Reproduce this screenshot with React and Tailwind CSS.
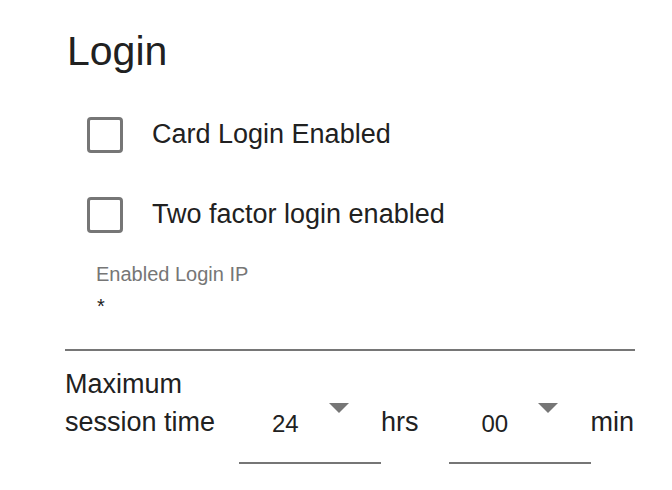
import { useState } from 'react';

const Checkbox = ({ label }) => {
  const [checked, setChecked] = useState(false);

  return (
    <label className="flex items-center h-[80px] pl-[87px] cursor-pointer">
      <span
        onClick={() => setChecked(!checked)}
        className="w-[36px] h-[36px] border-[3px] border-[#767676] rounded-[4px] shrink-0"
      ></span>
      <span className="ml-[29px] text-[27px] leading-[30px] text-[#212121] -mt-[3px]">{label}</span>
    </label>
  );
};

const SelectField = ({ value }) => {
  return (
    <div className="flex items-start w-[142px] h-[99px] border-b-2 border-[#767676] pl-[33px] shrink-0">
      <span className="mt-[45px] text-[24px] leading-[28px] text-[#212121]">{value}</span>
      <svg className="mt-[38px] ml-[30px] shrink-0" width="20" height="10" viewBox="0 0 20 10">
        <path d="M0 0 L20 0 L10 10 Z" fill="#767676" />
      </svg>
    </div>
  );
};

const App = () => {
  return (
    <div className="w-[672px] h-[490px] bg-white overflow-hidden font-['Liberation_Sans',Arial,sans-serif]">
      <h1 className="pt-[27px] pl-[67px] text-[41px] leading-[48px] font-normal text-[#212121]">Login</h1>

      <div className="mt-[20px]">
        <Checkbox label="Card Login Enabled" />
        <Checkbox label="Two factor login enabled" />
      </div>

      <div className="pl-[96px] mt-[7px]">
        <div className="text-[20px] leading-[24px] text-[#767676]">Enabled Login IP</div>
        <div className="mt-[8px] pl-[1px] text-[20px] leading-[24px] text-[#212121]">*</div>
      </div>

      <div className="ml-[65px] mt-[31px] w-[570px] h-[2px] bg-[#767676]"></div>

      <div className="flex items-start mt-[14px] pl-[65px] text-[27px] leading-[38px] text-[#212121]">
        <div className="w-[174px] shrink-0">
          <div>Maximum</div>
          <div>session time</div>
        </div>
        <SelectField value="24" />
        <span className="mt-[38px]">hrs</span>
        <div className="ml-[30px]">
          <SelectField value="00" />
        </div>
        <span className="mt-[38px]">min</span>
      </div>
    </div>
  );
};

export default App;
